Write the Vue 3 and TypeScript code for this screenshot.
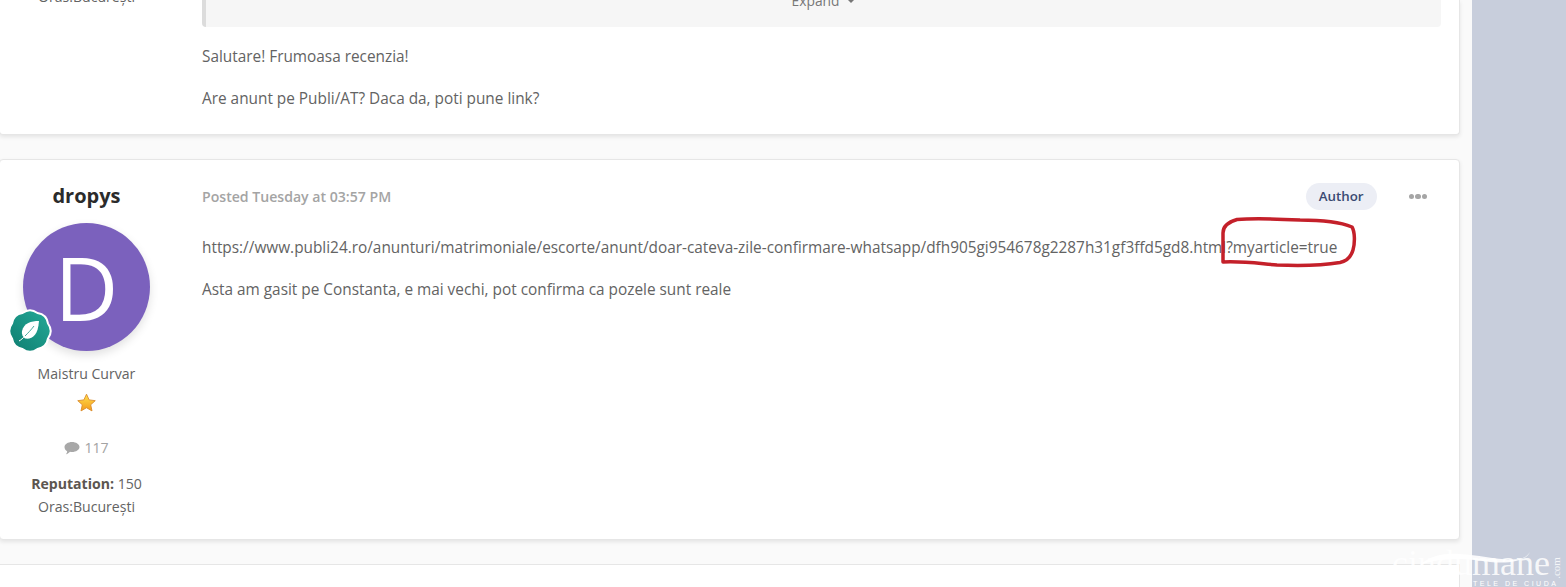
<script setup lang="ts">
const scallops = (() => {
  const pts: string[] = []
  const n = 8
  const rNotch = 19.5
  const rLobe = 23.5
  for (let i = 0; i < n; i++) {
    const a = (i / n) * Math.PI * 2 - Math.PI / 2 - Math.PI / n
    const b = ((i + 0.5) / n) * Math.PI * 2 - Math.PI / 2 - Math.PI / n
    const c = ((i + 1) / n) * Math.PI * 2 - Math.PI / 2 - Math.PI / n
    if (i === 0) pts.push(`M${(22 + rNotch * Math.cos(a)).toFixed(1)} ${(22 + rNotch * Math.sin(a)).toFixed(1)}`)
    pts.push(`Q${(22 + rLobe * Math.cos(b)).toFixed(1)} ${(22 + rLobe * Math.sin(b)).toFixed(1)} ${(22 + rNotch * Math.cos(c)).toFixed(1)} ${(22 + rNotch * Math.sin(c)).toFixed(1)}`)
  }
  return pts.join(' ') + 'Z'
})()
</script>

<template>
  <div class="page">
    <main class="column">
      <section class="post first">
        <aside class="author cut"><span>Oras:București</span></aside>
        <div class="body first-body">
          <div class="quote"><span class="expand">Expand <i class="caret"></i></span></div>
          <p>Salutare! Frumoasa recenzia!</p>
          <p>Are anunt pe Publi/AT? Daca da, poti pune link?</p>
        </div>
      </section>

      <section class="post second">
        <aside class="author">
          <h3 class="name">dropys</h3>
          <div class="avatar-wrap">
            <div class="avatar">D</div>
            <svg class="badge" viewBox="0 0 44 44" width="44" height="44">
              <defs>
                <linearGradient id="teal" x1="0" y1="1" x2="1" y2="0">
                  <stop offset="0" stop-color="#0e7d70" />
                  <stop offset="1" stop-color="#25aa98" />
                </linearGradient>
              </defs>
              <path :d="scallops" fill="url(#teal)" stroke="#fff" stroke-width="2" />
              <path d="M31 12c-8 0-15 2-17 10-.6 3 .8 6 3 7.500 7 1 13-2.500 14-17.500Z" fill="#fff" />
              <path d="M11 32c2-1 4-3 6-5" stroke="#fff" stroke-width="1" fill="none" />
              <path d="M17 27c3-3 6-6 9-10" stroke="#1a9484" stroke-width="0.8" fill="none" />
            </svg>
          </div>
          <div class="rank">Maistru Curvar</div>
          <svg class="star" viewBox="0 0 24 24" width="21" height="21">
            <defs>
              <linearGradient id="gold" x1="0" y1="0" x2="0" y2="1">
                <stop offset="0" stop-color="#ffe14d" />
                <stop offset="1" stop-color="#f39a1c" />
              </linearGradient>
            </defs>
            <path d="M12 2.500l3 6.500 7 .9-5.200 4.700 1.500 7-6.300-3.600-6.300 3.600 1.500-7L2 9.900l7-.9z" fill="url(#gold)" stroke="#d98a2a" stroke-width="1" stroke-linejoin="round" />
          </svg>
          <div class="count">
            <svg viewBox="0 0 16 14" width="16" height="14"><path d="M8 1c4 0 7.500 2.200 7.500 5S12 11 8 11c-.7 0-1.300 0-2-.2C5 12 3.500 13 2 13.300c.7-.9 1.200-2 1.200-3C1.500 9.300.5 7.800.5 6 .5 3.200 4 1 8 1Z" fill="#a8a8a8" /></svg>
            117
          </div>
          <div class="rep"><b>Reputation:</b> 150</div>
          <div class="city">Oras:București</div>
        </aside>
        <div class="body">
          <header class="meta">
            <span class="posted">Posted Tuesday at 03:57 PM</span>
            <span class="pill">Author</span>
            <span class="dots"><i></i><i></i><i></i></span>
          </header>
          <p>https://www.publi24.ro/anunturi/matrimoniale/escorte/anunt/doar-cateva-zile-confirmare-whatsapp/dfh905gi954678g2287h31gf3ffd5gd8.html?myarticle=true</p>
          <p>Asta am gasit pe Constanta, e mai vechi, pot confirma ca pozele sunt reale</p>
        </div>
      </section>

      <section class="post third"></section>
    </main>
    <div class="strip"></div>

    <svg class="scribble" width="1566" height="587" viewBox="0 0 1566 587">
      <path d="M1223 262V233C1223 226 1228 222 1237 219.500C1255 218 1280 219 1300 220C1320 220 1340 222 1352 227C1355 232 1355 243 1353 250C1351 257 1347 261 1340 262.500C1325 265 1300 266 1277 265C1262 264 1245 261 1223 262Z" fill="none" stroke="#c4202a" stroke-width="3.500" stroke-linejoin="round" />
    </svg>

    <div class="mark">
      <span class="word">ciudumane</span>
      <span class="tag">TELE DE CIUDA</span>
      <span class="com">.com</span>
      <svg class="swoosh" width="196" height="42" viewBox="0 0 196 42"><path d="M50 20C60 10 75 8 90 9C110 10 130 16 150 14C155 13 158 10 160 7C156 16 140 19 120 17C100 14 75 11 50 20Z" fill="#fff" opacity=".9" /></svg>
    </div>
  </div>
</template>

<style>
html, body { margin: 0; background: #fafafa; }
</style>

<style scoped>
.page {
  position: relative;
  display: flex;
  height: 587px;
  width: 1566px;
  overflow: hidden;
  font-family: "Open Sans", "Noto Sans", sans-serif;
  font-size: 14.100px;
  color: #636363;
  background: #fafafa;
}
.column {
  width: 1472px;
  flex: none;
  display: flex;
  flex-direction: column;
  gap: 24px;
  background: #fafafa;
}
.strip { flex: 1; background: #c8cedc; }
.post {
  flex: none;
  width: 1461px;
  margin-left: -1px;
  box-sizing: border-box;
  background: #fff;
  border: 1px solid #e6e6e6;
  border-radius: 4px;
  box-shadow: 0 2px 4px rgba(0, 0, 0, .09);
  display: flex;
}
.first { height: 135px; border-top: 0; border-radius: 0 0 4px 4px; }
.second { height: 381px; }
.third { height: 60px; box-shadow: none; border-radius: 0; }
.author {
  width: 173px;
  flex: none;
  display: flex;
  flex-direction: column;
  align-items: center;
  text-align: center;
}
.cut { height: 0; }
.cut span { margin-top: -13px; line-height: 20px; }
.body { flex: 1; margin-left: 29px; margin-right: 18px; min-width: 0; }
.first-body p:first-of-type { margin-top: 20px; }
.body p { margin: 0 0 22px; font-size: 15.360px; line-height: 20px; white-space: nowrap; }
.quote {
  height: 27px;
  background: #f6f6f6;
  border-left: 4px solid #dcdcdc;
  border-radius: 0 0 4px 4px;
  overflow: hidden;
  box-sizing: border-box;
  display: flex;
  justify-content: center;
  align-items: flex-end;
}
.expand {
  color: #777;
  font-size: 13.800px;
  line-height: 20px;
  margin-bottom: 16px;
  display: inline-flex;
  align-items: center;
  gap: 8px;
}
.caret {
  width: 0; height: 0;
  border-left: 4px solid transparent;
  border-right: 4px solid transparent;
  border-top: 4px solid #777;
}
.name {
  margin: 22px 0 0;
  font-size: 20px;
  line-height: 28px;
  font-weight: 700;
  color: #2b2b2b;
}
.avatar-wrap { position: relative; margin-top: 13px; width: 127px; height: 128px; }
.avatar {
  width: 127px; height: 128px;
  border-radius: 50%;
  background: #7b61bd;
  box-shadow: 0 4px 10px rgba(0, 0, 0, .12);
  color: #fff;
  font-size: 88px;
  line-height: 128px;
  font-weight: 400;
  text-align: center;
}
.badge { position: absolute; left: -15px; bottom: -2px; }
.rank { margin-top: 13px; line-height: 20px; }
.star { margin-top: 8px; display: block; }
.count {
  margin-top: 25px;
  color: #a3a3a3;
  line-height: 20px;
  display: flex;
  align-items: center;
  gap: 4px;
}
.rep { margin-top: 16px; line-height: 20px; }
.rep b { color: #5c5650; }
.city { margin-top: 3px; line-height: 20px; }
.meta { display: flex; align-items: center; margin: 23px 0 28px; height: 27px; }
.posted { font-weight: 600; color: #a4a4a4; flex: 1; }
.pill {
  background: #eceef5;
  color: #3a4a72;
  border-radius: 14px;
  font-size: 13.300px;
  font-weight: 600;
  padding: 0 13px;
  line-height: 27px;
  height: 27px;
}
.dots { display: flex; gap: 1px; margin-left: 32px; margin-right: 14px; }
.dots i { width: 5.500px; height: 5.500px; border-radius: 50%; background: #a5a5a5; }
.scribble { position: absolute; left: 0; top: 0; pointer-events: none; }
.mark { position: absolute; left: 1370px; top: 545px; width: 196px; height: 42px; color: #fff; font-family: "Liberation Serif", serif; }
.word { position: absolute; right: 16px; top: 1px; font-size: 36px; line-height: 34px; opacity: .85; white-space: nowrap; }
.tag { position: absolute; left: 103px; top: 35px; font-size: 7px; line-height: 7px; letter-spacing: 2.500px; white-space: nowrap; font-family: "Liberation Sans", sans-serif; }
.com { position: absolute; left: 186px; top: 23px; font-size: 11px; line-height: 11px; transform: translate(-50%, -50%) rotate(-90deg); opacity: .8; }
.swoosh { position: absolute; left: 0; top: 0; }
</style>
